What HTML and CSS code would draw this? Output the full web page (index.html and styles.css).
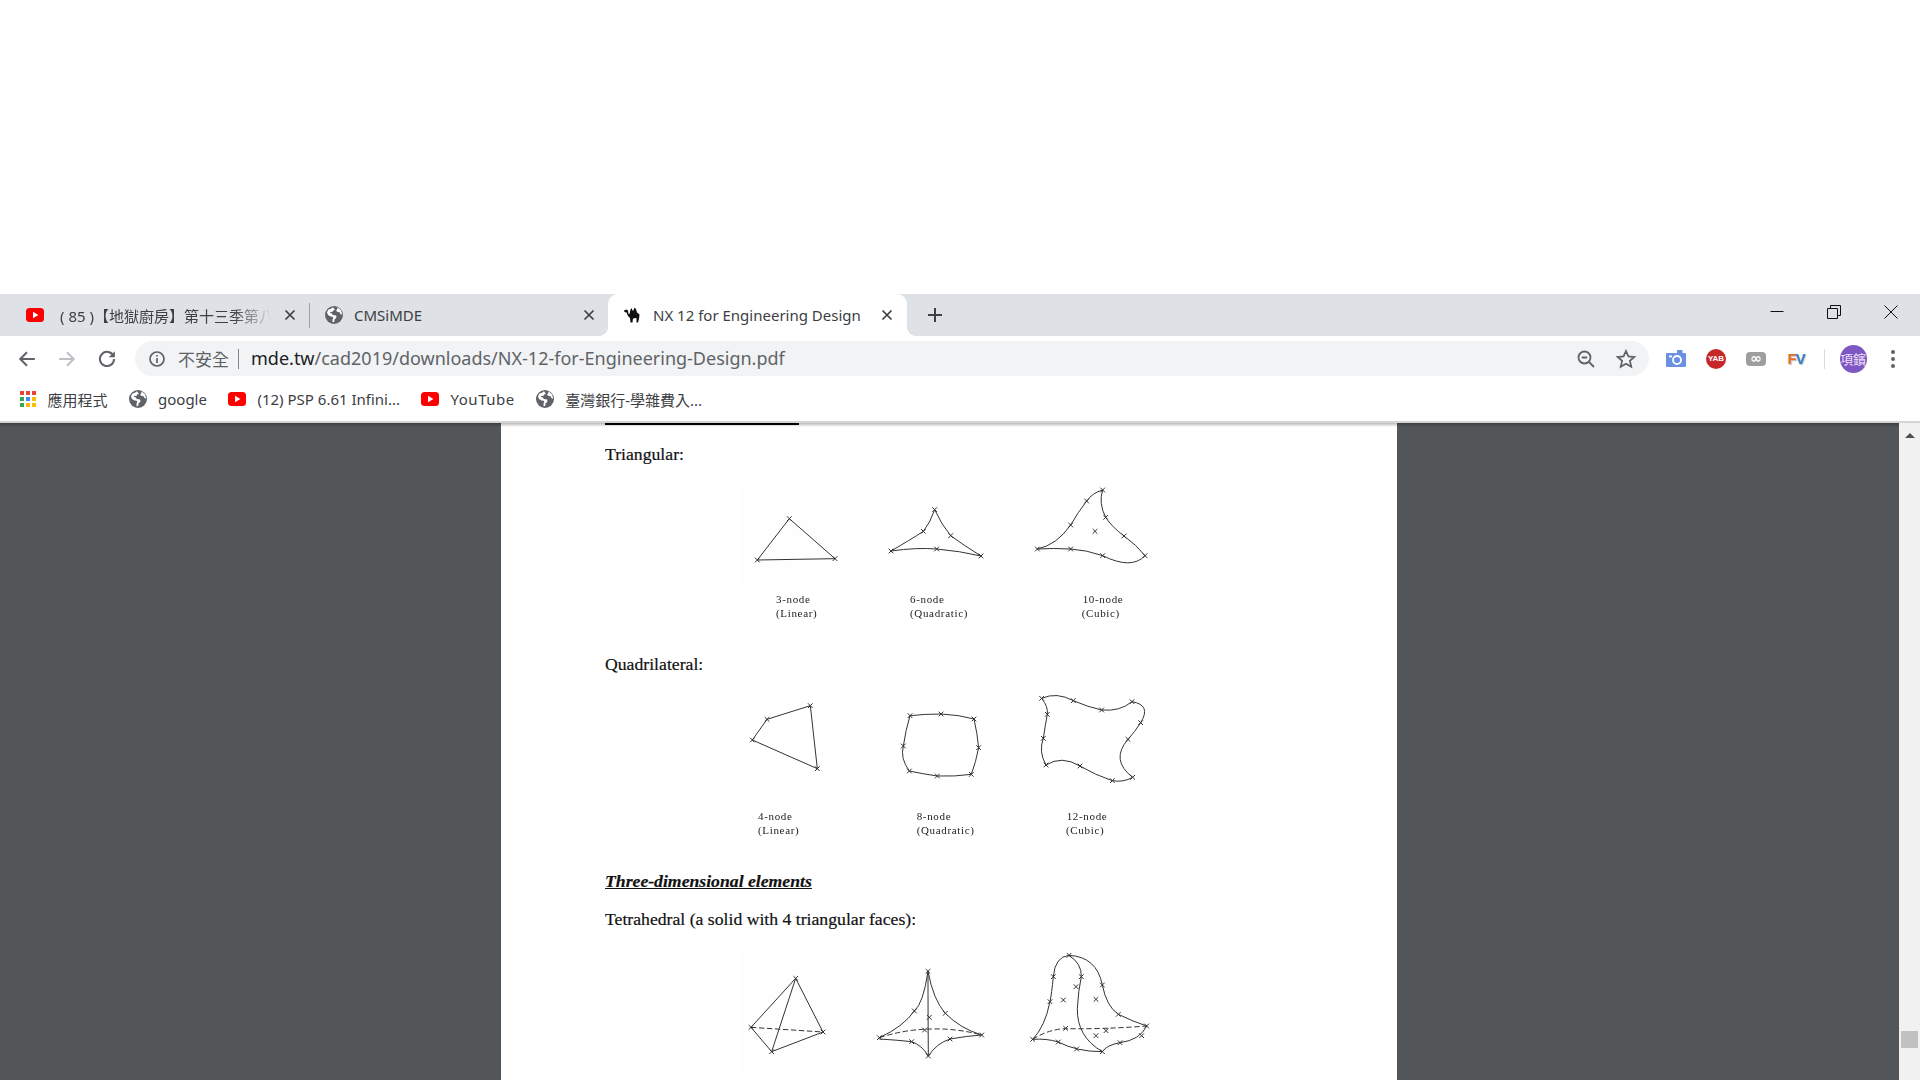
FILE: index.html

```html
<!DOCTYPE html>
<html lang="zh-Hant">
<head>
  <meta charset="UTF-8">
  <title>NX 12 for Engineering Design</title>
  <link rel="stylesheet" href="styles.css">
</head>
<body>
  <svg class="defs" width="0" height="0" aria-hidden="true">
    <defs>
      <symbol id="yt" viewBox="0 0 18 14">
        <rect width="18" height="14" rx="3.5" fill="#f00"/>
        <path d="M7 3.8v6.4L12.4 7z" fill="#fff"/>
      </symbol>
      <symbol id="globe" viewBox="0 0 18 18">
        <circle cx="9" cy="9" r="9" fill="#5f6368"/>
        <path d="M8 1.2 5.5 3 3.4 3.6 2 6.5l1 2.6 2.6 1.3 2.1.3.6 1.5-.9 1.4.3 2.6L9.2 16l.3-2.4 1.9-1.9-.2-2.2-3.4-.6-1.2-1.6-1.6-.2.4-1.4 2 .2.7-1.3 1.9-.5zM12.5 1.6l-.4 1.6-1 1.6 1.5 1.2 2 .2.8 1.8 1.4.7.2-1.5-1.4-3.4z" fill="#fff"/>
      </symbol>
      <path id="n" d="M-7-7 7 7M-7 7 7-7"/>
    </defs>
  </svg>

  <div class="blank"></div>

  <header class="chrome">
    <div class="tabstrip">
      <div class="tab tab-first">
        <svg class="favicon"><use href="#yt" y="2" width="18" height="14"/></svg>
        <span class="tab-title fade">(&nbsp;85&nbsp;)【地獄廚房】第十三季第八集</span>
        <svg class="tab-close" viewBox="0 0 12 12"><path d="M1.5 1.5l9 9M10.5 1.5l-9 9"/></svg>
      </div>
      <div class="tab-sep"></div>
      <div class="tab tab-second">
        <svg class="favicon"><use href="#globe" width="18" height="18"/></svg>
        <span class="tab-title">CMSiMDE</span>
        <svg class="tab-close" viewBox="0 0 12 12"><path d="M1.5 1.5l9 9M10.5 1.5l-9 9"/></svg>
      </div>
      <div class="tab tab-active">
        <svg class="favicon camel" viewBox="0 0 16 16"><path d="M0 3.5 2.500 2.500 4 3.500 4.500 7H5.500L6.500 2.500 7.500 1 8.500 3.500H9.500L10.500.5 12 2 13 5.500 15.500 7.500 15 12 14 15.500H12.500V11L9 11.500 8.500 15.500H6.500L6 11 4 9 2.500 5.500.5 5z"/></svg>
        <span class="tab-title">NX 12 for Engineering Design</span>
        <svg class="tab-close" viewBox="0 0 12 12"><path d="M1.500 1.500l9 9M10.500 1.500l-9 9"/></svg>
      </div>
      <svg class="new-tab" viewBox="0 0 14 14"><path d="M7 0v14M0 7h14"/></svg>
      <div class="win-controls">
        <div class="win-btn"><svg viewBox="0 0 14 14"><path d="M.5 6.500h13"/></svg></div>
        <div class="win-btn"><svg viewBox="0 0 14 14"><path d="M.5 3.500h10v10H.5zM3.500 3.500V.5h10v10h-3"/></svg></div>
        <div class="win-btn"><svg viewBox="0 0 14 14"><path d="M.5.5l13 13M13.500.5l-13 13"/></svg></div>
      </div>
    </div>

    <div class="toolbar">
      <div class="tool"><svg viewBox="0 0 16 16" class="nav-icon"><path d="M15 8H2M8 2 2 8l6 6"/></svg></div>
      <div class="tool is-off"><svg viewBox="0 0 16 16" class="nav-icon"><path d="M1 8h13M8 2l6 6-6 6"/></svg></div>
      <div class="tool"><svg viewBox="0 0 16 16" class="nav-icon"><path d="M13.800 5.500A6.300 6.300 0 1 0 14.300 8"/><path class="solid" d="M15 1v5.500H9.500z"/></svg></div>
      <div class="omnibox">
        <svg class="info-icon" viewBox="0 0 16 16"><circle cx="8" cy="8" r="7"/><path d="M8 7v5M8 4v1.600"/></svg>
        <span class="insecure">不安全</span>
        <span class="omni-sep"></span>
        <span class="url"><b>mde.tw</b>/cad2019/downloads/NX-12-for-Engineering-Design.pdf</span>
        <div class="omni-actions">
          <div class="tool"><svg viewBox="0 0 18 18" class="nav-icon"><circle cx="7.500" cy="7.500" r="6"/><path d="M4.800 7.500h5.400M12 12l5 5"/></svg></div>
          <div class="tool"><svg viewBox="0 0 18 18" class="nav-icon thin"><path d="M9 1.800l2.200 4.900 5.300.5-4 3.500 1.200 5.200L9 13.200l-4.700 2.700 1.200-5.200-4-3.500 5.300-.5z"/></svg></div>
        </div>
      </div>
      <div class="ext">
        <svg viewBox="0 0 20 17" class="ext-camera"><path d="M11 0h5.500v3H19a1 1 0 0 1 1 1v12a1 1 0 0 1-1 1H1a1 1 0 0 1-1-1V4a1 1 0 0 1 1-1h10z" fill="#6a8fe3"/><circle cx="11" cy="10" r="4" fill="none" stroke="#fff" stroke-width="1.800"/><rect x="3" y="5.500" width="3" height="1.800" fill="#fff"/></svg>
      </div>
      <div class="ext"><span class="ext-yab">YAB</span></div>
      <div class="ext"><span class="ext-inf">∞</span></div>
      <div class="ext"><span class="ext-fv"><i>F</i><em>V</em></span></div>
      <div class="ext-sep"></div>
      <div class="ext"><span class="avatar">項鑌</span></div>
      <div class="ext"><span class="dots"><i></i><i></i><i></i></span></div>
    </div>

    <nav class="bookmarks">
      <div class="bm">
        <span class="apps"><i class="r"></i><i class="r"></i><i class="r"></i><i class="g"></i><i class="b"></i><i class="y"></i><i class="g"></i><i class="y"></i><i class="y"></i></span>
        <span>應用程式</span>
      </div>
      <div class="bm"><svg class="favicon"><use href="#globe" width="18" height="18"/></svg><span>google</span></div>
      <div class="bm"><svg class="favicon"><use href="#yt" y="2" width="18" height="14"/></svg><span>(12) PSP 6.61 Infini...</span></div>
      <div class="bm"><svg class="favicon"><use href="#yt" y="2" width="18" height="14"/></svg><span class="wide">YouTube</span></div>
      <div class="bm"><svg class="favicon"><use href="#globe" width="18" height="18"/></svg><span>臺灣銀行-學雜費入...</span></div>
    </nav>
  </header>

  <main class="viewer-wrap">
    <div class="viewer">
      <article class="page">
        <div class="rule"></div>
        <p class="pdf-text first">Triangular:</p>
        <svg class="fig" viewBox="0 0 1380 510">
          <rect class="fig-bg" x="60" y="40" width="1250" height="310"/>
          <g class="soft">
            <path d="M208 146 112 270 345 266z"/>
            <path d="M644 119Q630 160 610 184 570 210 513 243 590 232 650 237 720 243 783 258 730 225 692 197 665 165 644 119z"/>
            <path d="M1148 60Q1118 68 1100 93 1075 125 1052 165 1010 225 952 237 1000 234 1052 237 1100 240 1148 257 1235 300 1275 257 1250 225 1212 198 1175 170 1157 142 1135 100 1148 60z"/>
            <use href="#n" x="208" y="146"/><use href="#n" x="112" y="270"/><use href="#n" x="345" y="266"/>
            <use href="#n" x="644" y="119"/><use href="#n" x="610" y="184"/><use href="#n" x="513" y="243"/><use href="#n" x="650" y="237"/><use href="#n" x="783" y="258"/><use href="#n" x="692" y="197"/>
            <use href="#n" x="1148" y="60"/><use href="#n" x="1100" y="93"/><use href="#n" x="1052" y="165"/><use href="#n" x="952" y="237"/><use href="#n" x="1052" y="237"/><use href="#n" x="1148" y="257"/><use href="#n" x="1275" y="257"/><use href="#n" x="1212" y="198"/><use href="#n" x="1157" y="142"/><use href="#n" x="1125" y="184"/>
          </g>
          <g class="labels">
            <text x="168" y="400">3-node</text><text x="168" y="442">(Linear)</text>
            <text x="570" y="400">6-node</text><text x="570" y="442">(Quadratic)</text>
            <text x="1088" y="400">10-node</text><text x="1085" y="442">(Cubic)</text>
          </g>
        </svg>
        <p class="pdf-text quad">Quadrilateral:</p>
        <svg class="fig" viewBox="0 0 1380 510">
          <g class="soft">
            <path d="M97 180 141 118 271 77 292 266z"/>
            <path d="M570 107Q615 102 663 102 715 104 762 117 772 160 776 203 768 245 754 283 705 290 652 288 610 282 568 273 540 235 550 198 557 150 570 107z"/>
            <path d="M965 55Q1010 35 1060 62 1100 80 1145 90 1200 95 1236 65 1295 75 1262 128 1245 155 1224 178 1170 240 1238 292 1210 308 1177 302 1125 285 1080 258 1025 225 978 255 955 215 970 175 975 140 982 103 985 80 965 55z"/>
            <use href="#n" x="97" y="180"/><use href="#n" x="141" y="118"/><use href="#n" x="271" y="77"/><use href="#n" x="292" y="266"/>
            <use href="#n" x="570" y="107"/><use href="#n" x="663" y="102"/><use href="#n" x="762" y="117"/><use href="#n" x="776" y="203"/><use href="#n" x="754" y="283"/><use href="#n" x="652" y="288"/><use href="#n" x="568" y="273"/><use href="#n" x="550" y="198"/>
            <use href="#n" x="965" y="55"/><use href="#n" x="1060" y="62"/><use href="#n" x="1145" y="90"/><use href="#n" x="1236" y="65"/><use href="#n" x="1262" y="128"/><use href="#n" x="1224" y="178"/><use href="#n" x="1238" y="292"/><use href="#n" x="1177" y="302"/><use href="#n" x="1080" y="258"/><use href="#n" x="978" y="255"/><use href="#n" x="970" y="175"/><use href="#n" x="982" y="103"/>
          </g>
          <g class="labels">
            <text x="114" y="420">4-node</text><text x="114" y="463">(Linear)</text>
            <text x="590" y="420">8-node</text><text x="590" y="463">(Quadratic)</text>
            <text x="1040" y="420">12-node</text><text x="1038" y="463">(Cubic)</text>
          </g>
        </svg>
        <p class="pdf-text heading">Three-dimensional elements</p>
        <p class="pdf-text tetra">Tetrahedral (a solid with 4 triangular faces):</p>
        <svg class="fig fig-tight" viewBox="0 0 1380 510">
          <rect class="fig-bg" x="60" y="50" width="1240" height="390"/>
          <g class="soft">
            <path d="M93 292 227 145 309 306 155 365zM227 145 155 365"/>
            <path class="dash" d="M93 292 309 306"/>
            <path d="M624 124Q610 220 583 243 550 290 478 323M624 124Q640 210 676 250 720 295 785 315M624 124Q624 260 625 378M478 327Q530 330 575 335 605 345 625 378 650 340 690 327 740 318 785 315"/>
            <path class="dash" d="M478 323Q550 300 614 298 700 292 785 315"/>
            <path d="M1047 76Q1005 80 1000 140 995 190 990 215 975 290 938 328M1047 76Q1130 80 1147 165 1160 230 1195 253 1240 275 1280 288M1047 76Q1085 100 1084 140 1075 180 1072 235 1070 320 1147 365M938 328Q980 325 1015 336 1070 365 1147 365 1160 345 1200 338 1260 330 1280 288"/>
            <path class="dash" d="M938 328Q985 298 1035 296 1150 298 1280 288"/>
            <use href="#n" x="93" y="292"/><use href="#n" x="227" y="145"/><use href="#n" x="309" y="306"/><use href="#n" x="155" y="365"/>
            <use href="#n" x="624" y="124"/><use href="#n" x="478" y="323"/><use href="#n" x="785" y="315"/><use href="#n" x="625" y="378"/><use href="#n" x="583" y="243"/><use href="#n" x="676" y="250"/><use href="#n" x="628" y="262"/><use href="#n" x="614" y="300"/><use href="#n" x="575" y="335"/><use href="#n" x="690" y="327"/>
            <use href="#n" x="1047" y="76"/><use href="#n" x="938" y="328"/><use href="#n" x="1280" y="288"/><use href="#n" x="1147" y="365"/><use href="#n" x="1000" y="140"/><use href="#n" x="990" y="215"/><use href="#n" x="1084" y="140"/><use href="#n" x="1147" y="165"/><use href="#n" x="1195" y="253"/><use href="#n" x="1030" y="210"/><use href="#n" x="1068" y="170"/><use href="#n" x="1128" y="208"/><use href="#n" x="1128" y="317"/><use href="#n" x="1037" y="295"/><use href="#n" x="1158" y="302"/><use href="#n" x="1265" y="317"/><use href="#n" x="1200" y="338"/><use href="#n" x="1070" y="357"/><use href="#n" x="1015" y="336"/>
          </g>
        </svg>
      </article>
    </div>
    <aside class="scrollbar">
      <span class="scroll-up"></span>
      <span class="scroll-thumb"></span>
    </aside>
  </main>
</body>
</html>
```

FILE: styles.css

```css
html, body {
  margin: 0;
  height: 100%;
  overflow: hidden;
}
body {
  display: flex;
  flex-direction: column;
  background-color: #fff;
  font-family: "Noto Sans", "Noto Sans CJK TC", sans-serif;
  color: #3c4043;
}
.defs {
  position: absolute;
}
.blank {
  height: 294px;
  flex: none;
}

/* tabs */
.tabstrip {
  display: flex;
  align-items: center;
  height: 42px;
  background-color: #dee1e6;
}
.tab {
  display: flex;
  align-items: center;
  height: 42px;
  box-sizing: border-box;
  flex: none;
  position: relative;
  font-size: 15px;
  white-space: nowrap;
}
.tab-first {
  width: 309px;
  padding: 0 13px 0 26px;
}
.tab-second {
  width: 298px;
  padding: 0 13px 0 15px;
}
.tab-active {
  width: 299px;
  padding: 0 14px 0 16px;
  background-color: #fff;
  border-radius: 10px 10px 0 0;
}
.tab-active::before,
.tab-active::after {
  content: "";
  position: absolute;
  bottom: 0;
  width: 10px;
  height: 10px;
}
.tab-active::before {
  left: -10px;
  background: radial-gradient(circle at 0 0, #dee1e6 10px, #fff 10.5px);
}
.tab-active::after {
  right: -10px;
  background: radial-gradient(circle at 100% 0, #dee1e6 10px, #fff 10.5px);
}
.tab-sep {
  width: 1px;
  height: 25px;
  background-color: #9aa0a6;
  flex: none;
}
.favicon {
  width: 18px;
  height: 18px;
  flex: none;
}
.camel {
  width: 16px;
  height: 16px;
  fill: #111;
}
.tab-title {
  flex: 1;
  min-width: 0;
  overflow: hidden;
  margin-left: 11px;
}
.tab-first .tab-title {
  margin-left: 16px;
}
.tab-active .tab-title {
  margin-left: 13px;
}
.fade {
  -webkit-mask-image: linear-gradient(to right, #000 80%, transparent 98%);
  mask-image: linear-gradient(to right, #000 80%, transparent 98%);
}
.tab-close {
  width: 12px;
  height: 12px;
  flex: none;
  margin-left: 8px;
  fill: none;
  stroke: #3c4043;
  stroke-width: 1.7;
}
.new-tab {
  width: 14px;
  height: 14px;
  margin-left: 21px;
  fill: none;
  stroke: #3c4043;
  stroke-width: 2;
}
.win-controls {
  display: flex;
  margin-left: auto;
  margin-right: 1px;
  align-self: flex-start;
}
.win-btn {
  display: flex;
  align-items: center;
  justify-content: center;
  width: 57px;
  height: 36px;
}
.win-btn svg {
  width: 14px;
  height: 14px;
  fill: none;
  stroke: #111;
  stroke-width: 1;
}

/* toolbar */
.toolbar {
  display: flex;
  align-items: flex-start;
  box-sizing: border-box;
  height: 42px;
  padding: 5px 0 0 7px;
  background-color: #fff;
}
.tool {
  display: flex;
  align-items: center;
  justify-content: center;
  width: 40px;
  height: 35px;
  flex: none;
}
.nav-icon {
  width: 18px;
  height: 18px;
  fill: none;
  stroke: #5f6368;
  stroke-width: 1.800;
}
.nav-icon .solid {
  fill: #5f6368;
  stroke: none;
}
.nav-icon.thin {
  width: 20px;
  height: 20px;
  stroke-width: 1.600;
}
.is-off .nav-icon {
  stroke: #bdc1c6;
}
.omnibox {
  display: flex;
  align-items: center;
  width: 1514px;
  height: 35px;
  margin-left: 8px;
  padding-left: 14px;
  box-sizing: border-box;
  flex: none;
  background-color: #f1f3f4;
  border-radius: 18px;
  font-size: 17px;
  color: #5f6368;
}
.info-icon {
  width: 16px;
  height: 16px;
  flex: none;
  fill: none;
  stroke: #5f6368;
  stroke-width: 1.700;
}
.insecure {
  margin-left: 13px;
}
.omni-sep {
  width: 1px;
  height: 20px;
  margin: 0 12px 0 9px;
  background-color: #80868b;
}
.url {
  font-size: 18px;
  line-height: 24px;
  margin-top: -2px;
}
.url b {
  font-weight: 400;
  color: #202124;
}
.omni-actions {
  display: flex;
  margin-left: auto;
  padding-right: 3px;
}
.ext {
  display: flex;
  align-items: center;
  justify-content: center;
  width: 40px;
  height: 35px;
  flex: none;
}
.toolbar > .omnibox + .ext {
  margin-left: 7px;
}
.ext-camera {
  width: 20px;
  height: 17px;
}
.ext-yab {
  width: 20px;
  height: 20px;
  border-radius: 50%;
  background-color: #c62828;
  color: #fff;
  font: bold 8px/20px "Liberation Sans", sans-serif;
  text-align: center;
}
.ext-inf {
  width: 20px;
  height: 14px;
  border-radius: 4px;
  background-color: #9e9e9e;
  color: #fff;
  font: bold 14px/13px "DejaVu Sans", sans-serif;
  text-align: center;
}
.ext-fv {
  font: bold 15px/1 "Liberation Sans", sans-serif;
  text-shadow: 1px 1px 1px #bbb;
  letter-spacing: -1px;
}
.ext-fv i {
  font-style: normal;
  color: #e0702a;
}
.ext-fv em {
  font-style: normal;
  color: #2f7fc9;
}
.ext-sep {
  width: 1px;
  height: 20px;
  margin: 8px 8px 0;
  background-color: #dadce0;
  flex: none;
}
.avatar {
  width: 27px;
  height: 28px;
  border-radius: 50%;
  background-color: #7e57c2;
  color: #ecdff5;
  font-size: 13px;
  line-height: 28px;
  text-align: center;
  white-space: nowrap;
  overflow: hidden;
}
.dots {
  display: flex;
  flex-direction: column;
  gap: 3px;
}
.dots i {
  width: 4px;
  height: 4px;
  border-radius: 50%;
  background-color: #5f6368;
}

/* bookmarks */
.bookmarks {
  display: flex;
  align-items: center;
  gap: 21px;
  height: 42px;
  padding: 0 0 1px 20px;
  background-color: #fff;
  border-bottom: 2px solid #d4d5d7;
  font-size: 15px;
}
.bm {
  display: flex;
  align-items: center;
  gap: 11.5px;
  white-space: nowrap;
}
.wide {
  letter-spacing: .5px;
}
.apps {
  display: grid;
  grid-template-columns: repeat(3, 4px);
  gap: 2px;
}
.apps i {
  height: 4px;
}
.apps .r { background-color: #ea4335; }
.apps .g { background-color: #34a853; }
.apps .b { background-color: #4285f4; }
.apps .y { background-color: #fbbc04; }

/* pdf viewer */
.viewer-wrap {
  display: flex;
  flex: 1;
  min-height: 0;
  position: relative;
}
.viewer-wrap::before {
  content: "";
  position: absolute;
  top: 0;
  left: 0;
  right: 21px;
  height: 4px;
  background: linear-gradient(rgba(0, 0, 0, .28), transparent);
}
.viewer {
  display: flex;
  justify-content: center;
  flex: 1;
  overflow: hidden;
  background-color: #525659;
}
.page {
  width: 896px;
  box-sizing: border-box;
  padding-left: 104px;
  background-color: #fff;
  flex: none;
  margin-right: 1px;
}
.rule {
  width: 194px;
  height: 2px;
  background-color: #000;
}
.pdf-text {
  margin: 0;
  font-family: "Liberation Serif", serif;
  font-size: 17.7px;
  line-height: 22px;
  color: #111;
  -webkit-text-stroke: .2px #111;
}
.first { margin-top: 18px; }
.quad { margin-top: 13px; }
.heading {
  margin-top: 20px;
  font-weight: bold;
  font-style: italic;
  text-decoration: underline;
}
.tetra { margin-top: 16px; }
.fig {
  display: block;
  width: 460px;
  height: 170px;
  margin: 5px 0 0 115px;
  fill: none;
  stroke: #333;
  stroke-width: 3;
}
.fig-tight {
  margin-top: 0;
}
.fig-bg {
  fill: #fefefe;
  stroke: none;
}
.soft {
  filter: blur(1.6px);
}
.dash {
  stroke-dasharray: 16 8;
}
.labels {
  filter: blur(.8px);
}
.fig text {
  fill: #222;
  stroke: none;
  font-family: "Liberation Serif", serif;
  font-size: 33px;
  letter-spacing: 2px;
}

/* scrollbar */
.scrollbar {
  display: flex;
  flex-direction: column;
  align-items: center;
  justify-content: space-between;
  width: 21px;
  box-sizing: border-box;
  padding: 10px 0 32px;
  flex: none;
  background-color: #f1f1f1;
}
.scroll-up {
  width: 0;
  height: 0;
  border-left: 5px solid transparent;
  border-right: 5px solid transparent;
  border-bottom: 5px solid #505050;
}
.scroll-thumb {
  width: 17px;
  height: 17px;
  background-color: #c1c1c1;
}
```
